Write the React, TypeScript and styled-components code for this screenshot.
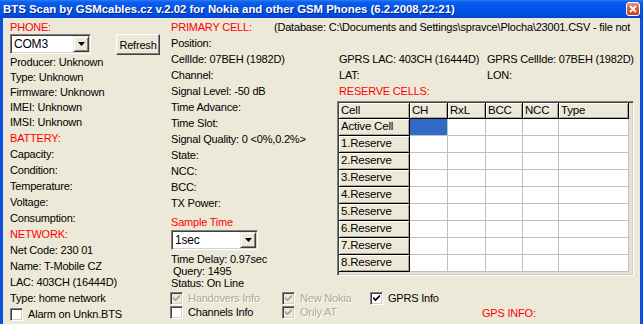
import React from 'react'
import styled, { createGlobalStyle } from 'styled-components'

const GlobalStyle = createGlobalStyle`
  *, *::before, *::after { box-sizing: border-box; }
  html, body { margin: 0; padding: 0; background: #ECE9D8; overflow: hidden; }
  body {
    font-family: "Liberation Sans", Arial, sans-serif;
    font-size: 11px;
    letter-spacing: -0.2px;
    color: #000;
  }
`

const WindowFrame = styled.div`
  width: 643px;
  height: 324px;
  display: flex;
  flex-direction: column;
  overflow: hidden;
  background: #ECE9D8;
`

const TitleBar = styled.div`
  flex: none;
  height: 18px;
  display: flex;
  align-items: center;
  padding: 0 3px 0 3px;
  background: linear-gradient(to bottom, #2B7CF5 0%, #0A5FEE 12%, #0055E8 45%, #0050E0 80%, #0044CF 100%);
  color: #fff;
  font-family: "Liberation Sans", Arial, sans-serif;
  font-weight: bold;
  font-size: 11.4px;
  letter-spacing: 0;
  text-shadow: 1px 1px 0 #0A1F8A;
`

const TitleText = styled.span`
  flex: 1;
  white-space: nowrap;
  overflow: hidden;
`

const CloseButton = styled.div`
  flex: none;
  width: 14px;
  height: 14px;
  border: 1px solid #fff;
  border-radius: 3px;
  background: linear-gradient(to bottom, #EA9A7E 0%, #E0603F 40%, #C8401C 100%);
  display: flex;
  align-items: center;
  justify-content: center;
`

const Body = styled.div`
  flex: 1;
  display: flex;
  min-height: 0;
  border-left: 3px solid #0A50DE;
  border-right: 3px solid #0A50DE;
  padding: 1px 0 0 7px;
`

const Column = styled.div<{ $w?: number }>`
  display: flex;
  flex-direction: column;
  ${({ $w }) => ($w ? `width: ${$w}px; flex: none;` : 'flex: 1; min-width: 0;')}
`

const Split = styled.div`
  display: flex;
`

const Line = styled.div<{ $h?: number; $red?: boolean; $indent?: number; $mt?: number }>`
  height: ${({ $h }) => $h ?? 16}px;
  line-height: ${({ $h }) => $h ?? 16}px;
  white-space: nowrap;
  color: ${({ $red }) => ($red ? '#FF0000' : '#000')};
  padding-left: ${({ $indent }) => $indent ?? 0}px;
  margin-top: ${({ $mt }) => $mt ?? 0}px;
`

const HeaderRow = styled.div`
  display: flex;
  height: 16px;
  line-height: 16px;
  white-space: nowrap;
  overflow: hidden;
`

const HeaderTitle = styled.span`
  flex: none;
  width: 103px;
  color: #FF0000;
`

const DatabaseText = styled.span`
  flex: 1;
  overflow: hidden;
`

const InfoRow = styled.div`
  display: flex;
  height: 16px;
  line-height: 16px;
  white-space: nowrap;
`

const InfoCell = styled.span<{ $w?: number }>`
  ${({ $w }) => ($w ? `width: ${$w}px; flex: none;` : 'flex: 1;')}
`

const ComboRow = styled.div`
  display: flex;
  align-items: flex-start;
  gap: 25px;
  height: 21px;
  margin-top: -1px;
`

const Combo = styled.div<{ $w: number }>`
  width: ${({ $w }) => $w}px;
  height: 20px;
  display: flex;
  background: #fff;
  border: 1px solid;
  border-color: #808080 #fff #fff #808080;
  box-shadow: inset 1px 1px 0 #404040, inset -1px -1px 0 #D4D0C8;
  padding: 1px;
`

const ComboValue = styled.span`
  flex: 1;
  line-height: 16px;
  padding-left: 2px;
  font-size: 12px;
`

const ComboArrow = styled.span`
  width: 16px;
  height: 16px;
  flex: none;
  display: flex;
  align-items: center;
  justify-content: center;
  background: #ECE9D8;
  border: 1px solid;
  border-color: #ECE9D8 #404040 #404040 #ECE9D8;
  box-shadow: inset 1px 1px 0 #fff, inset -1px -1px 0 #808080;
`

const PushButton = styled.div`
  width: 44px;
  height: 21px;
  display: flex;
  align-items: center;
  justify-content: center;
  background: #ECE9D8;
  border: 1px solid;
  border-color: #fff #404040 #404040 #fff;
  box-shadow: inset -1px -1px 0 #808080;
`

const CheckItem = styled.div<{ $disabled?: boolean; $h?: number }>`
  display: flex;
  align-items: center;
  gap: 5px;
  height: ${({ $h }) => $h ?? 14}px;
  white-space: nowrap;
  color: ${({ $disabled }) => ($disabled ? '#ACA899' : '#000')};
  text-shadow: ${({ $disabled }) => ($disabled ? '1px 1px 0 #fff' : 'none')};
`

const Box = styled.span<{ $disabled?: boolean }>`
  width: 13px;
  height: 13px;
  flex: none;
  display: flex;
  align-items: center;
  justify-content: center;
  background: ${({ $disabled }) => ($disabled ? '#ECE9D8' : '#fff')};
  border: 1px solid;
  border-color: #808080 #fff #fff #808080;
  box-shadow: inset 1px 1px 0 #404040, inset -1px -1px 0 #D4D0C8;
`

const CheckGrid = styled.div`
  display: grid;
  grid-template-columns: 112px 88px 112px 1fr;
  grid-auto-rows: 14px;
  margin-top: 2px;
  margin-left: -1px;
`

const GpsLabel = styled.span`
  color: #FF0000;
  line-height: 16px;
`

const TableFrame = styled.div`
  margin: 2px 0 0 -2px;
  width: 297px;
  height: 175px;
  border: 1px solid;
  border-color: #808080 #fff #fff #808080;
  box-shadow: inset 1px 1px 0 #404040, inset -1px -1px 0 #D4D0C8;
  background: #E4E2D8;
  padding: 1px;
`

const Grid = styled.div`
  display: grid;
  grid-template-columns: 71px 38px 38px 37px 36px 70px;
  grid-template-rows: 16px repeat(9, 17px);
  width: 290px;
`

const HeadCell = styled.div`
  background: #ECE9D8;
  border-right: 1px solid #000;
  border-bottom: 1px solid #000;
  box-shadow: inset 1px 1px 0 #fff, inset -1px -1px 0 #ACA899;
  padding-left: 2px;
  line-height: 15px;
  font-size: 11.5px;
  white-space: nowrap;
  overflow: hidden;
`

const DataCell = styled.div<{ $selected?: boolean }>`
  background: ${({ $selected }) => ($selected ? '#316AC5' : '#fff')};
  border-right: 1px solid #C0C0C0;
  border-bottom: 1px solid #C0C0C0;
`

const Arrow = () => (
  <svg width="7" height="4" viewBox="0 0 7 4">
    <path d="M0 0h7L3.5 4z" fill="#000" />
  </svg>
)

const Tick = ({ color }: { color: string }) => (
  <svg width="7" height="7" viewBox="0 0 7 7">
    <path d="M0 2.5l2.5 2.5L7 0.5" fill="none" stroke={color} strokeWidth="1.6" />
  </svg>
)

const Check = ({ label, checked, disabled, h }: { label: string; checked?: boolean; disabled?: boolean; h?: number }) => (
  <CheckItem $disabled={disabled} $h={h}>
    <Box $disabled={disabled}>{checked && <Tick color={disabled ? '#A0A0A0' : '#000'} />}</Box>
    <span>{label}</span>
  </CheckItem>
)

const phoneInfo = ['Producer: Unknown', 'Type: Unknown', 'Firmware: Unknown', 'IMEI: Unknown', 'IMSI: Unknown']
const battery = ['Capacity:', 'Condition:', 'Temperature:', 'Voltage:', 'Consumption:']
const network = ['Net Code: 230 01', 'Name: T-Mobile CZ', 'LAC: 403CH (16444D)', 'Type: home network']
const cellInfo = [
  'Position:',
  'CellIde: 07BEH (1982D)',
  'Channel:',
  'Signal Level: -50 dB',
  'Time Advance:',
  'Time Slot:',
  'Signal Quality: 0 <0%,0.2%>',
  'State:',
  'NCC:',
  'BCC:',
  'TX Power:',
]
const columns = ['Cell', 'CH', 'RxL', 'BCC', 'NCC', 'Type']
const rows = ['Active Cell', '1.Reserve', '2.Reserve', '3.Reserve', '4.Reserve', '5.Reserve', '6.Reserve', '7.Reserve', '8.Reserve']

export default function App() {
  return (
    <>
      <GlobalStyle />
      <WindowFrame>
        <TitleBar>
          <TitleText>BTS Scan by GSMcables.cz v.2.02 for Nokia and other GSM Phones (6.2.2008,22:21)</TitleText>
          <CloseButton>
            <svg width="8" height="8" viewBox="0 0 8 8">
              <path d="M1 1l6 6M7 1L1 7" stroke="#fff" strokeWidth="1.8" />
            </svg>
          </CloseButton>
        </TitleBar>
        <Body>
          <Column $w={161}>
            <Line $red>PHONE:</Line>
            <ComboRow>
              <Combo $w={81}>
                <ComboValue>COM3</ComboValue>
                <ComboArrow><Arrow /></ComboArrow>
              </Combo>
              <PushButton>Refresh</PushButton>
            </ComboRow>
            {phoneInfo.map(t => <Line key={t} $h={15}>{t}</Line>)}
            <Line $red>BATTERY:</Line>
            {battery.map(t => <Line key={t}>{t}</Line>)}
            <Line $red>NETWORK:</Line>
            {network.map(t => <Line key={t}>{t}</Line>)}
            <Check label="Alarm on Unkn.BTS" h={16} />
          </Column>
          <Column>
            <HeaderRow>
              <HeaderTitle>PRIMARY CELL:</HeaderTitle>
              <DatabaseText>(Database: C:\Documents and Settings\spravce\Plocha\23001.CSV - file not</DatabaseText>
            </HeaderRow>
            <Split>
              <Column $w={168}>
                {cellInfo.map(t => <Line key={t}>{t}</Line>)}
                <Line $red $mt={3}>Sample Time</Line>
                <Combo $w={87}>
                  <ComboValue>1sec</ComboValue>
                  <ComboArrow><Arrow /></ComboArrow>
                </Combo>
                <Line $h={12} $mt={3}>Time Delay: 0.97sec</Line>
                <Line $h={12} $indent={2}>Query: 1495</Line>
                <Line $h={12}>Status: On Line</Line>
              </Column>
              <Column>
                <Line />
                <InfoRow>
                  <InfoCell $w={148}>GPRS LAC: 403CH (16444D)</InfoCell>
                  <InfoCell>GPRS CellIde: 07BEH (1982D)</InfoCell>
                </InfoRow>
                <InfoRow>
                  <InfoCell $w={148}>LAT:</InfoCell>
                  <InfoCell>LON:</InfoCell>
                </InfoRow>
                <Line $red>RESERVE CELLS:</Line>
                <TableFrame>
                  <Grid>
                    {columns.map(c => <HeadCell key={c}>{c}</HeadCell>)}
                    {rows.map((r, ri) => (
                      <React.Fragment key={r}>
                        <HeadCell>{r}</HeadCell>
                        {columns.slice(1).map((c, ci) => (
                          <DataCell key={c} $selected={ri === 0 && ci === 0} />
                        ))}
                      </React.Fragment>
                    ))}
                  </Grid>
                </TableFrame>
              </Column>
            </Split>
            <CheckGrid>
              <Check label="Handovers Info" checked disabled />
              <Check label="New Nokia" checked disabled />
              <Check label="GPRS Info" checked />
              <span />
              <Check label="Channels Info" />
              <Check label="Only AT" checked disabled />
              <span />
              <GpsLabel>GPS INFO:</GpsLabel>
            </CheckGrid>
          </Column>
        </Body>
      </WindowFrame>
    </>
  )
}
